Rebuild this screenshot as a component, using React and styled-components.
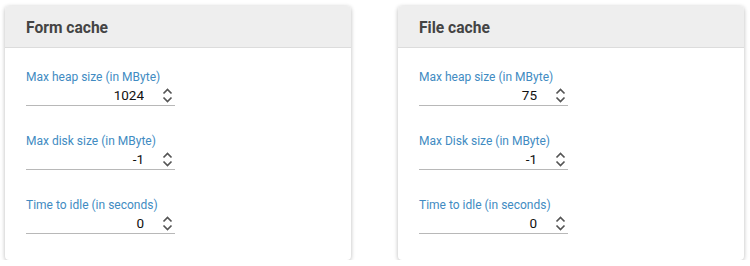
import styled, { createGlobalStyle } from "styled-components";

const GlobalStyle = createGlobalStyle`
  body {
    margin: 0;
    background: #fff;
    font-family: Roboto, "Liberation Sans", sans-serif;
  }
`

const Page = styled.div`
  display: flex;
  flex-direction: row;
  gap: 47px;
  padding: 6px 5px 0;
`

const Card = styled.section`
  width: 346px;
  background: #fff;
  border-radius: 4px;
  box-shadow: 0 1px 4px rgba(0, 0, 0, 0.28);
  overflow: hidden;
`

const Header = styled.div`
  background: #eeeeee;
  border-bottom: 1px solid #dcdcdc;
  padding: 3px 21px 0;
  height: 38px;
`

const Title = styled.h2`
  margin: 0;
  font-size: 15.6px;
  font-weight: 700;
  line-height: 38px;
  color: #444;
`

const Body = styled.div`
  display: flex;
  flex-direction: column;
  gap: 28px;
  padding: 22px 21px 26px;
`

const Field = styled.label`
  display: flex;
  flex-direction: column;
  width: 149px;
`

const Label = styled.span`
  font-size: 12px;
  line-height: 14px;
  color: #418bc2;
`

const InputRow = styled.div`
  display: flex;
  flex-direction: row;
  align-items: flex-start;
  height: 21px;
  border-bottom: 1px solid #b8b8b8;
`

const Value = styled.input`
  flex: 1;
  min-width: 0;
  border: none;
  outline: none;
  background: transparent;
  padding: 2px 0 0;
  margin: 0;
  font-family: Roboto, "Liberation Sans", sans-serif;
  font-size: 13.5px;
  line-height: 19px;
  height: 19px;
  color: #111;
  text-align: right;
`

const Spinner = styled.svg`
  flex: none;
  margin: 4px 2px 0 18px;
`

function Arrows() {
  return (
    <Spinner width="11" height="15" viewBox="0 0 11 15">
      <path d="M1.5 5.5 L5.5 1.5 L9.5 5.5" fill="none" stroke="#555" strokeWidth="1.7" />
      <path d="M1.5 9.5 L5.5 13.5 L9.5 9.5" fill="none" stroke="#555" strokeWidth="1.7" />
    </Spinner>
  );
}

function NumberField({ label, value }) {
  return (
    <Field>
      <Label>{label}</Label>
      <InputRow>
        <Value type="text" readOnly defaultValue={value} />
        <Arrows />
      </InputRow>
    </Field>
  );
}

const caches = [
  {
    title: "Form cache",
    fields: [
      ["Max heap size (in MByte)", "1024"],
      ["Max disk size (in MByte)", "-1"],
      ["Time to idle (in seconds)", "0"],
    ],
  },
  {
    title: "File cache",
    fields: [
      ["Max heap size (in MByte)", "75"],
      ["Max Disk size (in MByte)", "-1"],
      ["Time to idle (in seconds)", "0"],
    ],
  },
];

function App() {
  return (
    <>
      <GlobalStyle />
      <Page>
        {caches.map((c) => (
          <Card key={c.title}>
            <Header>
              <Title>{c.title}</Title>
            </Header>
            <Body>
              {c.fields.map(([label, value]) => (
                <NumberField key={label} label={label} value={value} />
              ))}
            </Body>
          </Card>
        ))}
      </Page>
    </>
  );
}
export default App;
